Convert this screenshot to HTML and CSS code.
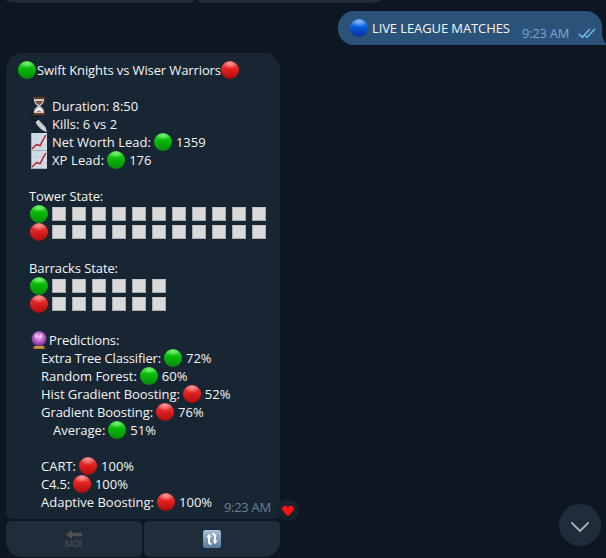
FILE: index.html
```html
<!DOCTYPE html>
<html lang="en">
<head>
<meta charset="utf-8">
<title>Chat</title>
<link rel="stylesheet" href="styles.css">
</head>
<body>
<main class="chat">
  <div class="prev"><span></span><span></span></div>

  <div class="outgoing">
    <i class="ball blue"></i>
    <span class="out-text">LIVE LEAGUE MATCHES</span>
    <time class="out-time">9:23 AM</time>
    <svg class="checks" width="18" height="11" viewBox="0 0 18 11"><path d="M.8 5.8 4.3 9.3 11.8 1M7.3 7.7 9 9.3 16.9 1"/></svg>
    <svg class="tail" width="6" height="14" viewBox="0 0 6 14"><path d="M0 0C0 6 1 10 6 14H0Z"/></svg>
  </div>

  <div class="message">
    <article class="bubble">
      <div class="line title"><i class="ball green"></i><span class="t1">Swift Knights vs Wiser Warriors</span><i class="ball red"></i></div>
      <div class="line"></div>
      <div class="line in1">
        <svg class="emoji" viewBox="0 0 18 18"><path d="M4 2C4 6 5 7 8 9C5 11 4 12 4 16H14C14 12 13 11 10 9C13 7 14 6 14 2Z" fill="#c3c8cc"/><path d="M5 4H13L12 6 9 8 6 6Z" fill="#805040"/><path d="M9 10 13 15H5Z" fill="#fff"/><path d="M6 15 9 13 12 15Z" fill="#9a5630"/><path d="M3 0H15V2.5H3ZM3 15.5H15V18H3Z" fill="#6b3824"/><path d="M4 2.8H14M4 15.2H14" stroke="#e7e2dd"/></svg>
        <span>Duration: 8:50</span></div>
      <div class="line in1">
        <svg class="emoji" viewBox="0 0 18 18"><path d="M1.2 -.8 7 5.7" stroke="#080a0d" stroke-width="3"/><path d="M1.500 -.2 7 5.500" stroke="#e0d6c4" stroke-width="1" stroke-dasharray="1 1.600"/><path d="M5.500 7 8.500 4.500 15.500 12 17 17C12 16 7.500 12 5.500 7Z" fill="#bfc3c6"/><path d="M7 7 16 16" stroke="#e8e8e8"/></svg>
        <span>Kills: 6 vs 2</span></div>
      <div class="line in1">
        <svg class="emoji" viewBox="0 0 18 18"><use href="#chart"/></svg>
        <span>Net Worth Lead:</span><i class="ball green"></i><span>1359</span></div>
      <div class="line in1">
        <svg class="emoji" viewBox="0 0 18 18"><g id="chart"><path d="M1 0H17V18H1Z" fill="#d0dce6"/><path d="M6.500 0V18M11.500 0V18M1 6H17M1 12H17" stroke="#bdcbd6" stroke-width=".7"/><path d="M1.500 0V17.500H17" fill="none" stroke="#a4b0bb"/><path d="M2 16 6.500 11.500 10 12.500 15.800 2" fill="none" stroke="#be2028" stroke-width="1.500"/></g></svg>
        <span class="xp">XP Lead:</span><i class="ball green"></i><span>176</span></div>
      <div class="line"></div>
      <div class="line in1 heading"><span>Tower State:</span></div>
      <div class="line in1 blocks"><i class="ball green"></i><b></b><b></b><b></b><b></b><b></b><b></b><b></b><b></b><b></b><b></b><b></b></div>
      <div class="line in1 blocks"><i class="ball red"></i><b></b><b></b><b></b><b></b><b></b><b></b><b></b><b></b><b></b><b></b><b></b></div>
      <div class="line"></div>
      <div class="line in1 heading"><span>Barracks State:</span></div>
      <div class="line in1 blocks"><i class="ball green"></i><b></b><b></b><b></b><b></b><b></b><b></b></div>
      <div class="line in1 blocks"><i class="ball red"></i><b></b><b></b><b></b><b></b><b></b><b></b></div>
      <div class="line"></div>
      <div class="line in1 tight">
        <svg class="emoji" viewBox="0 0 18 18"><defs><radialGradient id="orb" cx=".5" cy=".38" r=".6"><stop offset="0" stop-color="#f3c3f3"/><stop offset=".5" stop-color="#c168cd"/><stop offset="1" stop-color="#6d2b87"/></radialGradient></defs><path d="M4 15H14L15 18H3Z" fill="#ad762b"/><path d="M5 16H13" stroke="#edc45c"/><circle cx="9" cy="7.700" r="7.500" fill="url(#orb)"/><path d="M5 4 7 2.500V6L5 7ZM10 3 12 4V7L10 6Z" fill="#fff" opacity=".6"/></svg>
        <span>Predictions:</span></div>
      <div class="line in2 extra"><span>Extra Tree Classifier:</span><i class="ball green"></i><span>72%</span></div>
      <div class="line in2"><span>Random Forest:</span><i class="ball green"></i><span>60%</span></div>
      <div class="line in2 snug"><span>Hist Gradient Boosting:</span><i class="ball red"></i><span>52%</span></div>
      <div class="line in2 snug"><span>Gradient Boosting:</span><i class="ball red"></i><span>76%</span></div>
      <div class="line in3"><span>Average:</span><i class="ball green"></i><span>51%</span></div>
      <div class="line"></div>
      <div class="line in2"><span>CART:</span><i class="ball red"></i><span>100%</span></div>
      <div class="line in2 c45"><span>C4.5:</span><i class="ball red"></i><span>100%</span></div>
      <div class="line in2"><span>Adaptive Boosting:</span><i class="ball red"></i><span>100%</span><time class="in-time">9:23 AM</time></div>
    </article>
    <div class="reaction"><svg width="12" height="12" viewBox="0 0 12 12"><path d="M6 11.500C4.500 9 .2 6.800.2 3.500.2.300 4.600-.4 6 2.500 7.400-.4 11.800.3 11.800 3.500 11.800 6.800 7.500 9 6 11.500Z" fill="#ff1015"/></svg></div>
  </div>

  <div class="keyboard">
    <div class="key back"><svg width="16" height="9" viewBox="0 0 16 9"><path d="M0 4.500 6 0V2.700H16V6.300H6V9Z" fill="#53504e"/></svg><span>BACK</span></div>
    <div class="key refresh"><svg width="18" height="18" viewBox="0 0 18 18"><defs><linearGradient id="tile" x2="0" y2="1"><stop offset="0" stop-color="#a9c2d9"/><stop offset="1" stop-color="#55789c"/></linearGradient></defs><rect width="18" height="18" rx="2.500" fill="url(#tile)"/><path d="M6 6.500V12Q6 14 8.500 14M12 11.500V6Q12 4 9.500 4" fill="none" stroke="#fff" stroke-width="2"/><path d="M3.300 7.500 6 3.800 8.700 7.500ZM9.300 10.500H14.700L12 14.200Z" fill="#fff"/></svg></div>
  </div>

  <div class="scroll-down"><svg width="20" height="12" viewBox="0 0 20 12"><path d="M1.300 1.300 10 10 18.700 1.300"/></svg></div>
</main>
</body>
</html>
```
FILE: styles.css
```css
* { box-sizing: border-box; }
body { margin: 0; background: #0e1621; }
.chat {
  position: relative; width: 606px; height: 558px; overflow: hidden;
  font: 13px/18px "Open Sans", sans-serif; color: #f5f5f5;
}
.prev { display: flex; gap: 4px; height: 3px; padding-left: 6px; }
.prev span { width: 188px; background: #1f2c39; border-radius: 0 0 6px 14px / 0 0 3px 3px; }
.prev span + span { width: 183px; border-radius: 0 0 14px 6px / 0 0 3px 3px; }

.outgoing {
  position: relative; display: flex; align-items: flex-start;
  width: 264px; height: 34px; margin: 8px 0 8px 338px; padding: 8px 0 0 12px;
  background: #2b5278; border-radius: 16px 16px 0 16px;
}
.out-text { margin-left: 4px; width: 138px; white-space: nowrap; letter-spacing: -.1px; }
.out-time { margin: 5px 0 0 12px; width: 47px; color: #7da8d3; white-space: nowrap; letter-spacing: -.27px; }
.checks { margin: 9px 0 0 9px; fill: none; stroke: #6db9f5; stroke-width: 1.5; }
.tail { position: absolute; left: 264px; bottom: 0; fill: #2b5278; }

.ball { flex: none; width: 18px; height: 18px; border-radius: 50%; }
.green { background: radial-gradient(ellipse 8px 4px at 50% 15%, #78f675, transparent), linear-gradient(#38dc35, #08b708 45%, #07a307 70%, #078b07); }
.red { background: radial-gradient(ellipse 8px 5px at 50% 15%, #ff9b9b, transparent), linear-gradient(#ef4a4a, #df2020 48%, #c61616 75%, #a90e0e); }
.blue { background: radial-gradient(ellipse 8px 5px at 50% 15%, #83bfff, transparent), linear-gradient(#3e8df2, #0757dc 50%, #063fbb 75%, #06349b); }

.message { display: flex; align-items: flex-end; }
.bubble {
  width: 274px; height: 466px; margin-left: 6px; padding: 8px 9px 8px 12px;
  background: #182533; border-radius: 16px 16px 5px 5px;
}
.line { display: flex; height: 18px; white-space: nowrap; }
.line .ball + span { margin-left: 4px; }
.line span + .ball { margin-left: 3px; }
.line .emoji + span { margin-left: 4px; }
.line.title .ball + span, .line.title span + .ball { margin-left: 1px; }
.t1 { width: 183px; letter-spacing: -.11px; }
.in1 { padding-left: 12px; }
.in1 > span:first-child { margin-left: -1px; }
.in2 { padding-left: 23px; }
.in3 { padding-left: 35px; }
.heading { letter-spacing: -.1px; }
.line.tight .emoji + span { margin-left: 1px; letter-spacing: -.08px; }
.xp { letter-spacing: .1px; }
.extra span:first-child { letter-spacing: -.14px; }
.snug span:first-child { letter-spacing: -.06px; }
.c45 span:first-child { letter-spacing: -.2px; }
.emoji { flex: none; width: 18px; height: 18px; overflow: visible; }
.blocks { align-items: center; gap: 6px; }
.blocks .ball { margin-right: -2px; }
.blocks b { width: 14px; height: 14px; background: #dadada; border: 1px solid #a5abb0; border-top-color: #c3c5c7; }
.in-time { margin: 5px 0 0 auto; color: #6d7f8f; letter-spacing: -.27px; }
.reaction {
  display: flex; justify-content: center; align-items: center;
  width: 22px; height: 21px; margin: 0 0 -2px -3px; border-radius: 11px; background: #18222d;
}

.keyboard { display: flex; gap: 2px; margin: 2px 0 0 6px; }
.key {
  display: flex; flex-direction: column; align-items: center; justify-content: center;
  width: 136px; height: 36px; background: #1f2c39;
}
.back { border-radius: 5px 5px 5px 16px; }
.back span { margin-top: 1px; font: bold 9px/8px "Roboto", sans-serif; color: #484a4c; transform: scaleX(.77); }
.refresh { border-radius: 5px 5px 16px 5px; }

.scroll-down {
  position: absolute; right: 5px; bottom: 12px; width: 42px; height: 42px;
  display: flex; align-items: center; justify-content: center; padding-top: 4px;
  border-radius: 50%; background: #1f2c39;
}
.scroll-down svg { fill: none; stroke: #adb4ba; stroke-width: 1.8; }
```
